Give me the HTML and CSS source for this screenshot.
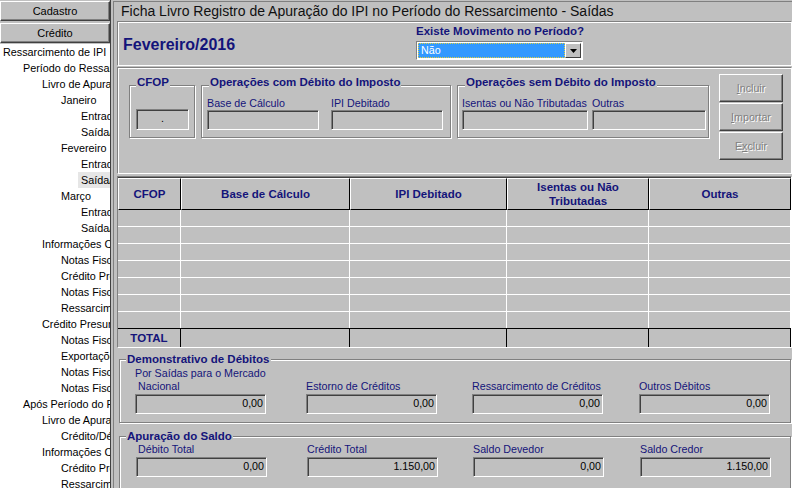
FILE: index.html
```html
<!DOCTYPE html>
<html lang="pt-BR">
<head>
<meta charset="utf-8">
<title>Ficha Livro Registro de Apuração do IPI</title>
<link rel="stylesheet" href="styles.css">
</head>
<body>
<div class="app">
  <aside class="sidebar">
    <div class="nav">
      <div class="navbtn">Cadastro</div>
      <div class="navbtn">Crédito</div>
    </div>
    <ul class="tree">
      <li class="l0">Ressarcimento de IPI</li>
      <li class="l1">Período do Ressarcimento</li>
      <li class="l2">Livro de Apuração</li>
      <li class="l3">Janeiro</li>
      <li class="l4">Entradas</li>
      <li class="l4">Saída/Exportação</li>
      <li class="l3">Fevereiro</li>
      <li class="l4">Entradas</li>
      <li class="l4"><span class="sel">Saída/Exportação</span></li>
      <li class="l3">Março</li>
      <li class="l4">Entradas</li>
      <li class="l4">Saída/Exportação</li>
      <li class="l2">Informações Complementares</li>
      <li class="l3">Notas Fiscais</li>
      <li class="l3">Crédito Presumido</li>
      <li class="l3">Notas Fiscais</li>
      <li class="l3">Ressarcimento</li>
      <li class="l2">Crédito Presumido</li>
      <li class="l3">Notas Fiscais</li>
      <li class="l3">Exportações</li>
      <li class="l3">Notas Fiscais</li>
      <li class="l3">Notas Fiscais</li>
      <li class="l1">Após Período do Ressarcimento</li>
      <li class="l2">Livro de Apuração</li>
      <li class="l3">Crédito/Débito</li>
      <li class="l2">Informações Complementares</li>
      <li class="l3">Crédito Presumido</li>
      <li class="l3">Ressarcimento</li>
    </ul>
  </aside>

  <main class="main">
    <div class="titlebar">Ficha Livro Registro de Apuração do IPI no Período do Ressarcimento - Saídas</div>

    <section class="panel period">
      <div class="period-title">Fevereiro/2016</div>
      <div class="movimento">
        <div class="mov-label">Existe Movimento no Período?</div>
        <div class="select">
          <div class="sel-value">Não</div>
          <div class="sel-btn"><svg width="7" height="4" viewBox="0 0 7 4"><path d="M0 0h7L3.5 4z" fill="#000"/></svg></div>
        </div>
      </div>
    </section>

    <section class="panel entry">
      <fieldset class="group fs-cfop">
        <legend>CFOP</legend>
        <div class="field cfop-field">.</div>
      </fieldset>
      <fieldset class="group fs-deb">
        <legend>Operações com Débito do Imposto</legend>
        <div class="pair">
          <div class="col"><label class="lbl">Base de Cálculo</label><div class="field w112"></div></div>
          <div class="col"><label class="lbl">IPI Debitado</label><div class="field w112"></div></div>
        </div>
      </fieldset>
      <fieldset class="group fs-sem">
        <legend>Operações sem Débito do Imposto</legend>
        <div class="pair tight">
          <div class="col"><label class="lbl">Isentas ou Não Tributadas</label><div class="field w126"></div></div>
          <div class="col"><label class="lbl">Outras</label><div class="field w114"></div></div>
        </div>
      </fieldset>
      <div class="actions">
        <div class="btn"><u>I</u>ncluir</div>
        <div class="btn"><u>I</u>mportar</div>
        <div class="btn">E<u>x</u>cluir</div>
      </div>
    </section>

    <section class="gridwrap">
      <table class="grid">
        <colgroup>
          <col class="c1"><col class="c2"><col class="c3"><col class="c4"><col class="c5">
        </colgroup>
        <thead>
          <tr><th>CFOP</th><th>Base de Cálculo</th><th>IPI Debitado</th><th>Isentas ou Não Tributadas</th><th>Outras</th></tr>
        </thead>
        <tbody>
          <tr><td></td><td></td><td></td><td></td><td></td></tr>
          <tr><td></td><td></td><td></td><td></td><td></td></tr>
          <tr><td></td><td></td><td></td><td></td><td></td></tr>
          <tr><td></td><td></td><td></td><td></td><td></td></tr>
          <tr><td></td><td></td><td></td><td></td><td></td></tr>
          <tr><td></td><td></td><td></td><td></td><td></td></tr>
          <tr class="last"><td></td><td></td><td></td><td></td><td></td></tr>
          <tr class="total"><td>TOTAL</td><td></td><td></td><td></td><td></td></tr>
        </tbody>
      </table>
    </section>

    <fieldset class="group wide demo">
      <legend>Demonstrativo de Débitos</legend>
      <div class="sub">Por Saídas para o Mercado</div>
      <div class="row4">
        <div class="col"><label class="lbl ind">Nacional</label><div class="field w131">0,00</div></div>
        <div class="col"><label class="lbl">Estorno de Créditos</label><div class="field w131">0,00</div></div>
        <div class="col"><label class="lbl">Ressarcimento de Créditos</label><div class="field w131">0,00</div></div>
        <div class="col"><label class="lbl">Outros Débitos</label><div class="field w131">0,00</div></div>
      </div>
    </fieldset>

    <fieldset class="group wide saldo">
      <legend>Apuração do Saldo</legend>
      <div class="row4">
        <div class="col"><label class="lbl ind">Débito Total</label><div class="field w131">0,00</div></div>
        <div class="col"><label class="lbl">Crédito Total</label><div class="field w131">1.150,00</div></div>
        <div class="col"><label class="lbl">Saldo Devedor</label><div class="field w131">0,00</div></div>
        <div class="col"><label class="lbl">Saldo Credor</label><div class="field w131">1.150,00</div></div>
      </div>
    </fieldset>
  </main>
</div>
</body>
</html>
```

FILE: styles.css
```css
* { box-sizing: border-box; }

body {
  margin: 0;
  width: 792px;
  height: 488px;
  overflow: hidden;
  background: #c0c0c0;
  font-family: "Liberation Sans", Arial, sans-serif;
  font-size: 10.7px;
  color: #000;
}

.app {
  display: flex;
  height: 488px;
  overflow: hidden;
}

/* ---------- sidebar ---------- */
.sidebar {
  width: 111px;
  flex: none;
  display: flex;
  flex-direction: column;
  background: #fff;
  border-right: 1px solid #404040;
  overflow: hidden;
}

.sidebar > * { flex: none; }

.nav {
  background: #c0c0c0;
  padding: 1px 0;
  display: flex;
  flex-direction: column;
  gap: 2px;
}

.navbtn {
  height: 20px;
  line-height: 18px;
  text-align: center;
  border: 1px solid;
  border-color: #fff #404040 #404040 #fff;
  box-shadow: inset -1px -1px 0 #808080;
  color: #000;
  font-size: 11px;
}

.tree {
  list-style: none;
  margin: 0;
  padding: 0;
}

.tree li {
  height: 16px;
  line-height: 16px;
  white-space: nowrap;
  color: #000;
  font-size: 10.8px;
}

.tree .l0 { padding-left: 3px; }
.tree .l1 { padding-left: 23px; }
.tree .l2 { padding-left: 42px; }
.tree .l3 { padding-left: 61px; }
.tree .l4 { padding-left: 81px; }

.tree .sel {
  display: inline-block;
  background: #e6e6e6;
  margin-left: -3px;
  padding-left: 3px;
  height: 16px;
}

/* ---------- main ---------- */
.main {
  flex: 1;
  min-width: 0;
  margin-left: 2px;
  margin-top: 1px;
  border-left: 1px solid #808080;
  border-top: 1px solid #808080;
  padding-left: 3px;
  display: flex;
  flex-direction: column;
  overflow: hidden;
}

.main > * { flex: none; }

.titlebar {
  height: 19px;
  line-height: 19px;
  padding-left: 4px;
  font-size: 14px;
  color: #101010;
  white-space: nowrap;
}

.panel {
  border: 1px solid;
  border-color: #808080 #fff #fff #808080;
  box-shadow: inset 1px 1px 0 #fff;
}

/* period panel */
.period {
  height: 45px;
  display: flex;
  align-items: flex-start;
  padding-left: 5px;
}

.period-title {
  width: 293px;
  font-size: 16px;
  font-weight: bold;
  color: #14147a;
  margin-top: 14px;
  line-height: 18px;
}

.movimento {
  display: flex;
  flex-direction: column;
  padding-top: 2px;
}

.mov-label {
  line-height: 14px;
  font-size: 11.5px;
  font-weight: bold;
  color: #14147a;
}

.select {
  margin-top: 3px;
  width: 167px;
  height: 19px;
  display: flex;
  border: 1px solid;
  border-color: #808080 #fff #fff #808080;
  background: #fff;
  padding: 1px;
}

.sel-value {
  flex: 1;
  background: #3399ff;
  color: #fff;
  line-height: 13px;
  padding-left: 2px;
  border: 1px dotted #e0d040;
}

.sel-btn {
  width: 16px;
  flex: none;
  background: #c0c0c0;
  border: 1px solid;
  border-color: #fff #404040 #404040 #fff;
  display: flex;
  align-items: center;
  justify-content: center;
}

/* entry panel */
.entry {
  margin-top: 1px;
  height: 107px;
  display: flex;
  align-items: flex-start;
  padding-left: 11px;
}

.group {
  margin: 0;
  padding: 0;
  min-width: 0;
  border: 1px solid #808080;
  box-shadow: inset 1px 1px 0 #fff, 1px 1px 0 #fff;
}

.group legend {
  font-size: 11.5px;
  font-weight: bold;
  color: #14147a;
  line-height: 14px;
  padding: 0 1px;
  background: #c0c0c0;
  white-space: nowrap;
}

.entry .group {
  margin-top: 7px;
  height: 63px;
}

.entry .group legend { padding-bottom: 6px; }

.fs-cfop {
  width: 66px;
  padding: 14px 0 0 6px;
}
.fs-cfop legend { margin-left: 0; }

.fs-deb {
  width: 250px;
  margin-left: 6px;
  padding: 2px 0 0 5px;
}
.fs-deb legend { margin-left: 2px; }

.fs-sem {
  width: 252px;
  margin-left: 6px;
  padding: 2px 0 0 4px;
}
.fs-sem legend { margin-left: 3px; }

.pair {
  display: flex;
  gap: 12px;
}
.pair.tight { gap: 4px; }

.col {
  display: flex;
  flex-direction: column;
}

.lbl {
  line-height: 13px;
  color: #14147a;
  white-space: nowrap;
}

.field {
  height: 20px;
  line-height: 17px;
  border: 1px solid;
  border-color: #808080 #fff #fff #808080;
  box-shadow: inset 1px 1px 0 #404040;
  background: #c0c0c0;
  text-align: right;
  padding-right: 2px;
  color: #000;
}

.cfop-field {
  width: 53px;
  height: 21px;
  text-align: center;
  padding-right: 0;
}

.w112 { width: 112px; }
.w126 { width: 126px; }
.w114 { width: 114px; }
.w131 { width: 131px; }

.actions {
  margin-left: 10px;
  margin-top: 6px;
  display: flex;
  flex-direction: column;
  gap: 1px;
}

.btn {
  width: 64px;
  height: 28px;
  line-height: 26px;
  text-align: center;
  color: #808080;
  text-shadow: 1px 1px 0 #fff;
  border: 1px solid;
  border-color: #fff #404040 #404040 #fff;
  box-shadow: inset -1px -1px 0 #808080;
}

/* grid */
.gridwrap {
  margin-top: 2px;
  border: 1px solid;
  border-color: #808080 #fff #fff #808080;
}

.grid {
  border-collapse: separate;
  border-spacing: 0;
  table-layout: fixed;
  width: 673px;
  border-top: 1px solid #404040;
}

.c1 { width: 63px; }
.c2 { width: 169px; }
.c3 { width: 157px; }
.c4 { width: 142px; }
.c5 { width: 142px; }

.grid th {
  height: 32px;
  padding: 0 10px;
  font-size: 11.5px;
  font-weight: bold;
  color: #14147a;
  line-height: 14px;
  text-align: center;
  border-top: 1px solid #fff;
  border-left: 1px solid #fff;
  border-right: 1px solid #000;
  border-bottom: 1px solid #000;
}

.grid td {
  height: 17px;
  padding: 0;
  border-right: 1px solid #fff;
  border-bottom: 1px solid #fff;
}

.grid tr.last td {
  height: 16px;
  border-bottom: 0;
}

.grid tr.total td {
  height: 19px;
  border-top: 1px solid #000;
  border-right: 1px solid #000;
  border-bottom: 0;
  font-size: 11.5px;
  font-weight: bold;
  color: #14147a;
  text-align: center;
}

/* bottom groups */
.wide {
  width: 672px;
  margin-left: 2px;
}

.demo {
  margin-top: 4px;
  height: 71px;
  padding: 0 0 0 15px;
}
.demo legend { margin-left: -9px; }

.saldo {
  margin-top: 6px;
  height: 70px;
  padding: 0 0 0 16px;
}
.saldo legend { margin-left: -10px; }

.sub {
  line-height: 14px;
  color: #14147a;
}

.row4 {
  display: grid;
  grid-template-columns: 171px 166px 167px 131px;
}

.row4 .lbl { margin-bottom: 1px; }
.demo .lbl.ind { padding-left: 3px; }
.saldo .lbl.ind { padding-left: 2px; }
```
